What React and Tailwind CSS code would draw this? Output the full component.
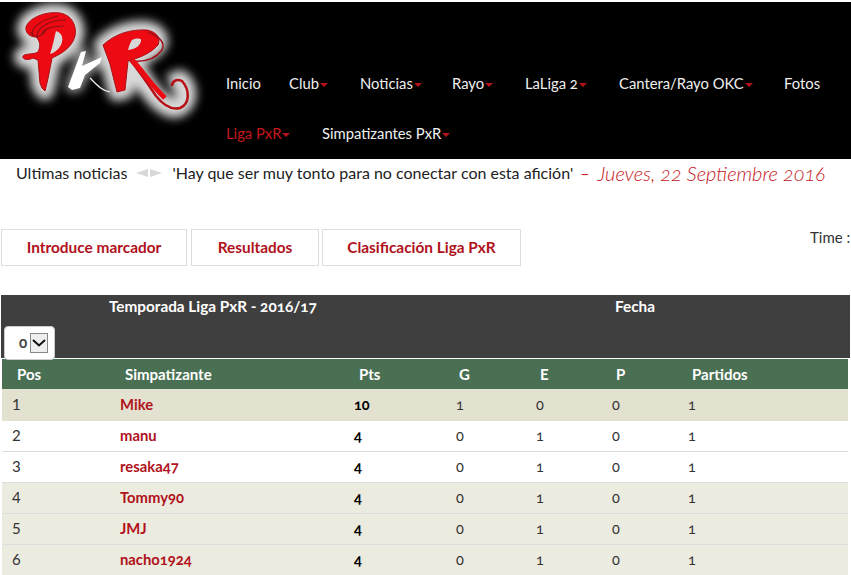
import React from "react";

const font = "font-['Lato','Liberation_Sans',sans-serif]";

const rows = [
    { pos: 1, name: "Mike", pts: 10, g: 1, e: 0, p: 0, pj: 1, bg: "bg-[#e3e1cf]", border: "border-[#e3e1cf]" },
    { pos: 2, name: "manu", pts: 4, g: 0, e: 1, p: 0, pj: 1, bg: "bg-white", border: "border-[#dddddd]" },
    { pos: 3, name: "resaka47", pts: 4, g: 0, e: 1, p: 0, pj: 1, bg: "bg-white", border: "border-[#dddddd]" },
    { pos: 4, name: "Tommy90", pts: 4, g: 0, e: 1, p: 0, pj: 1, bg: "bg-[#ecebe0]", border: "border-[#dddddd]" },
    { pos: 5, name: "JMJ", pts: 4, g: 0, e: 1, p: 0, pj: 1, bg: "bg-[#ecebe0]", border: "border-[#dddddd]" },
    { pos: 6, name: "nacho1924", pts: 4, g: 0, e: 1, p: 0, pj: 1, bg: "bg-[#ecebe0]", border: "border-[#dddddd]" },
];

const pPath = "M33 58C27 61 22 59 23 56C26 53 33 55 38 52C41 46 40 41 36 37C30 37 25 33 26 27C29 18 45 11 60 13C72 15 77 26 75 36C72 47 63 53 52 58C50 68 48 80 45 91L42 88L40 83L38 60Z";
const aPath = "M68 87L81 52L86 51L82 66L102 57L100 63L85 75L80 88L72 90Z";
const rPath = "M103 45C115 34 130 29 147 30C157 32 161 38 158 45C152 52 142 57 131 60L128 61L125 90L117 92L110 64Z";

const Logo = () => (
    <svg width="215" height="156" viewBox="0 2 215 156" className="shrink-0">
        <defs>
            <filter id="glow" x="-20%" y="-20%" width="140%" height="140%">
                <feGaussianBlur stdDeviation="5" />
            </filter>
        </defs>
        <g filter="url(#glow)" fill="#d8d8d8" stroke="#d8d8d8" strokeWidth="18" strokeLinejoin="round">
            <path d={pPath} />
            <path d={aPath} strokeWidth="6" fill="#999999" stroke="#999999" />
            <path d={rPath} />
            <path d="M132 62C145 85 160 108 175 108C188 106 190 88 180 80L170 84" fill="none" strokeWidth="20" />
        </g>
        <path d={pPath} fill="#ee0a12" stroke="#a81016" strokeWidth="1" />
        <path d="M56 31C62 33 64 38 61 45C58 50 54 53 50 54C53 46 54 38 56 31Z" fill="#d8d8d8" />
        <path d="M33 36C30 28 40 20 58 16M37 38C36 28 48 20 66 20M41 36C42 30 50 26 64 26M30 32C36 40 42 36 46 30" fill="none" stroke="#8f0f14" strokeWidth="1.2" />
        <path d={aPath} fill="#ffffff" />
        <path d="M90 78C96 84 102 91 110 92" fill="none" stroke="#f4f4f4" strokeWidth="1.2" />
        <path d={rPath} fill="#ee0a12" stroke="#a81016" strokeWidth="1" />
        <path d="M132 40C137 38 142 38 141 41C140 45 137 49 128 50C129 46 130 43 132 40Z" fill="#d8d8d8" />
        <path d="M148 32C158 36 166 42 162 50C156 58 146 62 134 61" fill="none" stroke="#a01015" strokeWidth="1.5" />
        <path d="M130 60C140 72 148 84 156 96C164 106 172 110 180 108C190 104 190 90 182 81C176 78 172 82 172 86" fill="none" stroke="#b80f15" strokeWidth="2.500" />
        <path d="M132 60C142 70 150 84 165 98" fill="none" stroke="#ee0a12" strokeWidth="5" />
    </svg>
);

const Caret = () => (
    <span className="inline-block ml-[1px] w-0 h-0 border-x-[4px] border-x-transparent border-t-[4px] border-t-[#b5121b] align-middle" />
);

const NavItem = ({ label, caret, active, className }) => (
    <a className={`whitespace-nowrap text-[14.800px] ${active ? "text-[#c4161c]" : "text-[#f0f0f0]"} ${className}`}>
        {label}
        {caret && <Caret />}
    </a>
);

const Tab = ({ children, className }) => (
    <a className={`flex items-center justify-center h-[37px] border border-[#dddddd] text-[15.400px] font-bold text-[#b0121b] ${className}`}>
        {children}
    </a>
);

const App = () => {
    return (
        <div className={`w-[851px] h-[575px] overflow-hidden bg-white pt-[2px] oldstyle-nums ${font}`}>
            {/* header */}
            <header className="flex h-[157px] bg-black">
                <Logo />
                <nav className="pl-[11px] w-full">
                    <div className="flex items-center h-[50px] mt-[56px]">
                        <NavItem label="Inicio" className="w-[63px]" />
                        <NavItem label="Club" caret className="w-[71px]" />
                        <NavItem label="Noticias" caret className="w-[92px]" />
                        <NavItem label="Rayo" caret className="w-[73px]" />
                        <NavItem label="LaLiga 2" caret className="w-[94px]" />
                        <NavItem label="Cantera/Rayo OKC" caret className="w-[165px]" />
                        <NavItem label="Fotos" />
                    </div>
                    <div className="flex items-center h-[50px]">
                        <NavItem label="Liga PxR" caret active className="w-[96px]" />
                        <NavItem label="Simpatizantes PxR" caret />
                    </div>
                </nav>
            </header>

            {/* ticker */}
            <div className="flex items-center h-[28px] pl-[16px] text-[16px] text-[#222222] whitespace-nowrap">
                <span>Ultimas noticias</span>
                <span className="flex gap-[2px] ml-[9px] mr-[10px]">
                    <span className="w-0 h-0 border-y-[4px] border-y-transparent border-r-[12px] border-r-[#d8d8d8]" />
                    <span className="w-0 h-0 border-y-[4px] border-y-transparent border-l-[12px] border-l-[#d8d8d8]" />
                </span>
                <span>'Hay que ser muy tonto para no conectar con esta afición'</span>
                <span className="ml-[7px] text-[#c4161c]">–</span>
                <span className="ml-[8px] text-[20px] italic font-light text-[#c4161c]">Jueves, 22 Septiembre 2016</span>
            </div>

            {/* tabs */}
            <div className="flex justify-between items-start mt-[42px] pl-[1px]">
                <div className="flex">
                    <Tab className="w-[186px]">Introduce marcador</Tab>
                    <Tab className="w-[128px] ml-[4px]">Resultados</Tab>
                    <Tab className="w-[199px] ml-[3px]">Clasificación Liga PxR</Tab>
                </div>
                <span className="text-[15px] text-[#333333] w-[41px] mt-[-3px] whitespace-nowrap">Time :</span>
            </div>

            {/* table head */}
            <div className="mt-[29px] ml-[1px] w-[849px] h-[63px] bg-[#3f3f3f] text-white text-[15.300px] font-bold flex">
                <div className="w-[425px]">
                    <p className="pl-[108px]">Temporada Liga PxR - 2016/17</p>
                    <div className="mt-[8px] ml-[3px] flex items-center w-[51px] h-[34px] bg-white rounded-[4px] border border-[#cccccc] pl-[14px] text-[#444444]">
                        <span className="w-[11px]">0</span>
                        <span className="flex items-center justify-center w-[18px] h-[20px] bg-[#eeeeee] border border-[#888888]">
                            <svg width="14" height="8" viewBox="0 0 14 8" fill="none" stroke="#111111" strokeWidth="2">
                                <path d="M1 1l6 5.500 6-5.500" />
                            </svg>
                        </span>
                    </div>
                </div>
                <p className="pl-[189px]">Fecha</p>
            </div>

            {/* table */}
            <table className="ml-[2px] mt-[1px] w-[846px] table-fixed border-collapse">
                <colgroup>
                    <col className="w-[118px]" />
                    <col className="w-[234px]" />
                    <col className="w-[101px]" />
                    <col className="w-[80px]" />
                    <col className="w-[76px]" />
                    <col className="w-[76px]" />
                    <col />
                </colgroup>
                <thead>
                    <tr className="h-[30px] bg-[#4a7054] text-white text-[15px] font-bold text-left">
                        <th className="pl-[15px]">Pos</th>
                        <th className="pl-[5px]">Simpatizante</th>
                        <th className="pl-[5px]">Pts</th>
                        <th className="pl-[4px]">G</th>
                        <th className="pl-[5px]">E</th>
                        <th className="pl-[5px]">P</th>
                        <th className="pl-[5px]">Partidos</th>
                    </tr>
                </thead>
                <tbody>
                    {rows.map((row) => (
                        <tr key={row.pos} className={`h-[31px] border-b ${row.border} ${row.bg} text-[14.500px] text-[#333333]`}>
                            <td className="pl-[10px] text-[15px] text-[#333333] lining-nums">{row.pos}</td>
                            <td className="text-[14.800px] font-bold text-[#b0121b]">{row.name}</td>
                            <td className="font-bold text-black pt-[1px]">{row.pts}</td>
                            <td className="pl-[1px] pt-[1px]">{row.g}</td>
                            <td className="pl-[1px] pt-[1px]">{row.e}</td>
                            <td className="pl-[1px] pt-[1px]">{row.p}</td>
                            <td className="pl-[1px] pt-[1px]">{row.pj}</td>
                        </tr>
                    ))}
                </tbody>
            </table>
        </div>
    );
};

export default App;
